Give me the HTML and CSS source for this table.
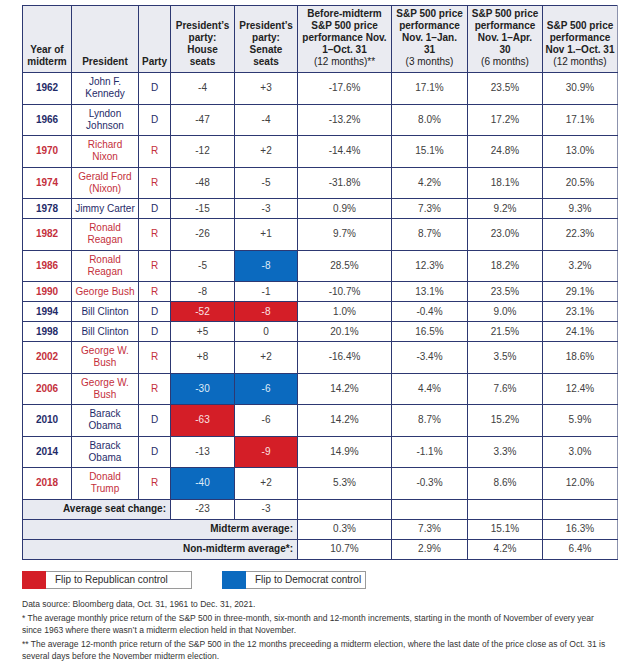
FILE: index.html
```html
<!DOCTYPE html>
<html>
<head>
<meta charset="utf-8">
<link rel="stylesheet" href="styles.css">
</head>
<body>
<div class="page">
<table class="grid">
<colgroup>
<col class="c-year"><col class="c-pres"><col class="c-party"><col class="c-house"><col class="c-senate"><col class="c-before"><col class="c-m3"><col class="c-m6"><col class="c-m12">
</colgroup>
<thead>
<tr>
<th>Year of<br>midterm</th>
<th>President</th>
<th>Party</th>
<th>President’s<br>party:<br>House<br>seats</th>
<th>President’s<br>party:<br>Senate<br>seats</th>
<th>Before-midterm<br>S&amp;P 500 price<br>performance Nov.<br>1–Oct. 31<br><span class="sub">(12 months)**</span></th>
<th>S&amp;P 500 price<br>performance<br>Nov. 1–Jan.<br>31<br><span class="sub">(3 months)</span></th>
<th>S&amp;P 500 price<br>performance<br>Nov. 1–Apr.<br>30<br><span class="sub">(6 months)</span></th>
<th>S&amp;P 500 price<br>performance<br>Nov 1.–Oct. 31<br><span class="sub">(12 months)</span></th>
</tr>
</thead>
<tbody>
<tr class="dem tall"><td class="yr">1962</td><td>John F.<br>Kennedy</td><td>D</td><td>-4</td><td>+3</td><td>-17.6%</td><td>17.1%</td><td>23.5%</td><td>30.9%</td></tr>
<tr class="dem tall"><td class="yr">1966</td><td>Lyndon<br>Johnson</td><td>D</td><td>-47</td><td>-4</td><td>-13.2%</td><td>8.0%</td><td>17.2%</td><td>17.1%</td></tr>
<tr class="rep tall"><td class="yr">1970</td><td>Richard<br>Nixon</td><td>R</td><td>-12</td><td>+2</td><td>-14.4%</td><td>15.1%</td><td>24.8%</td><td>13.0%</td></tr>
<tr class="rep tall"><td class="yr">1974</td><td>Gerald Ford<br>(Nixon)</td><td>R</td><td>-48</td><td>-5</td><td>-31.8%</td><td>4.2%</td><td>18.1%</td><td>20.5%</td></tr>
<tr class="dem"><td class="yr">1978</td><td>Jimmy Carter</td><td>D</td><td>-15</td><td>-3</td><td>0.9%</td><td>7.3%</td><td>9.2%</td><td>9.3%</td></tr>
<tr class="rep tall"><td class="yr">1982</td><td>Ronald<br>Reagan</td><td>R</td><td>-26</td><td>+1</td><td>9.7%</td><td>8.7%</td><td>23.0%</td><td>22.3%</td></tr>
<tr class="rep tall"><td class="yr">1986</td><td>Ronald<br>Reagan</td><td>R</td><td>-5</td><td class="flip-d">-8</td><td>28.5%</td><td>12.3%</td><td>18.2%</td><td>3.2%</td></tr>
<tr class="rep"><td class="yr">1990</td><td>George Bush</td><td>R</td><td>-8</td><td>-1</td><td>-10.7%</td><td>13.1%</td><td>23.5%</td><td>29.1%</td></tr>
<tr class="dem"><td class="yr">1994</td><td>Bill Clinton</td><td>D</td><td class="flip-r">-52</td><td class="flip-r">-8</td><td>1.0%</td><td>-0.4%</td><td>9.0%</td><td>23.1%</td></tr>
<tr class="dem"><td class="yr">1998</td><td>Bill Clinton</td><td>D</td><td>+5</td><td>0</td><td>20.1%</td><td>16.5%</td><td>21.5%</td><td>24.1%</td></tr>
<tr class="rep tall"><td class="yr">2002</td><td>George W.<br>Bush</td><td>R</td><td>+8</td><td>+2</td><td>-16.4%</td><td>-3.4%</td><td>3.5%</td><td>18.6%</td></tr>
<tr class="rep tall"><td class="yr">2006</td><td>George W.<br>Bush</td><td>R</td><td class="flip-d">-30</td><td class="flip-d">-6</td><td>14.2%</td><td>4.4%</td><td>7.6%</td><td>12.4%</td></tr>
<tr class="dem tall"><td class="yr">2010</td><td>Barack<br>Obama</td><td>D</td><td class="flip-r">-63</td><td>-6</td><td>14.2%</td><td>8.7%</td><td>15.2%</td><td>5.9%</td></tr>
<tr class="dem tall"><td class="yr">2014</td><td>Barack<br>Obama</td><td>D</td><td>-13</td><td class="flip-r">-9</td><td>14.9%</td><td>-1.1%</td><td>3.3%</td><td>3.0%</td></tr>
<tr class="rep tall"><td class="yr">2018</td><td>Donald<br>Trump</td><td>R</td><td class="flip-d">-40</td><td>+2</td><td>5.3%</td><td>-0.3%</td><td>8.6%</td><td>12.0%</td></tr>
<tr class="sum"><td class="label" colspan="3">Average seat change:</td><td>-23</td><td>-3</td><td></td><td></td><td></td><td></td></tr>
<tr class="sum"><td class="label" colspan="5">Midterm average:</td><td>0.3%</td><td>7.3%</td><td>15.1%</td><td>16.3%</td></tr>
<tr class="sum"><td class="label" colspan="5">Non-midterm average*:</td><td>10.7%</td><td>2.9%</td><td>4.2%</td><td>6.4%</td></tr>
</tbody>
</table>

<div class="legend">
  <div class="key key-r"><span class="swatch red"></span><span class="key-text">Flip to Republican control</span></div>
  <div class="key key-d"><span class="swatch blue"></span><span class="key-text">Flip to Democrat control</span></div>
</div>

<div class="notes">
  <p>Data source: Bloomberg data, Oct. 31, 1961 to Dec. 31, 2021.</p>
  <p>* The average monthly price return of the S&amp;P 500 in three-month, six-month and 12-month increments, starting in the month of November of every year since 1963 where there wasn’t a midterm election held in that November.</p>
  <p>** The average 12-month price return of the S&amp;P 500 in the 12 months preceeding a midterm election, where the last date of the price close as of Oct. 31 is several days before the November midterm election.</p>
</div>
</div>
</body>
</html>
```

FILE: styles.css
```css
html, body {
  margin: 0;
  padding: 0;
  background: #ffffff;
}

.page {
  padding: 5px 23px 0 22px;
  font-family: "Liberation Sans", Arial, sans-serif;
  color: #333333;
}

.grid {
  border-collapse: collapse;
  table-layout: fixed;
  width: 595px;
  font-size: 10px;
  line-height: 12px;
}

.c-year { width: 49px; }
.c-pres { width: 67px; }
.c-party { width: 32px; }
.c-house { width: 64px; }
.c-senate { width: 63px; }
.c-before { width: 94px; }
.c-m3 { width: 76px; }
.c-m6 { width: 75px; }
.c-m12 { width: 75px; }

.grid th,
.grid td {
  border: 1px solid #2d3872;
  padding: 0;
  text-align: center;
  vertical-align: middle;
}

.grid th:last-child,
.grid td:last-child {
  border-right-color: #8c92ad;
}

.grid thead th {
  background: #eaebf1;
  color: #222222;
  font-weight: bold;
  vertical-align: bottom;
  height: 62px;
  padding-bottom: 4px;
}

.grid .sub {
  font-weight: normal;
}

.grid tbody tr {
  height: 20px;
}

.grid tbody tr.tall {
  height: 31.5px;
}

.grid tbody td {
  color: #404040;
}

.dem td:nth-child(-n+3) {
  color: #1f2b68;
}

.rep td:nth-child(-n+3) {
  color: #c4303c;
}

.grid td.yr {
  font-weight: bold;
}

.grid td.flip-r {
  background: #d41e27;
  color: #fbe3e3;
}

.grid td.flip-d {
  background: #0b6abf;
  color: #dfeaf7;
}

.grid tr.sum td {
  background: #ffffff;
}

.grid tr.sum td.label {
  background: #e8eaf1;
  color: #1a1a1a;
  font-weight: bold;
  text-align: right;
  padding-right: 4px;
}

.legend {
  display: flex;
  gap: 30px;
  margin-top: 11px;
}

.key {
  display: flex;
  align-items: center;
  height: 18px;
  border: 1px solid #9a9a9a;
  box-sizing: border-box;
  font-size: 10px;
  color: #2a2a2a;
}

.key-r { width: 170px; }
.key-d { width: 144px; }

.swatch {
  width: 24px;
  height: 18px;
  margin: -1px 0 0 -1px;
  align-self: flex-start;
}

.swatch.red { background: #d41e27; }
.swatch.blue { background: #0b6abf; }

.key-text {
  margin-left: 9px;
}

.notes {
  margin-top: 10px;
  font-size: 8.5px;
  line-height: 11.5px;
  color: #333333;
  width: 590px;
}

.notes p {
  margin: 0 0 3px 0;
}
```
